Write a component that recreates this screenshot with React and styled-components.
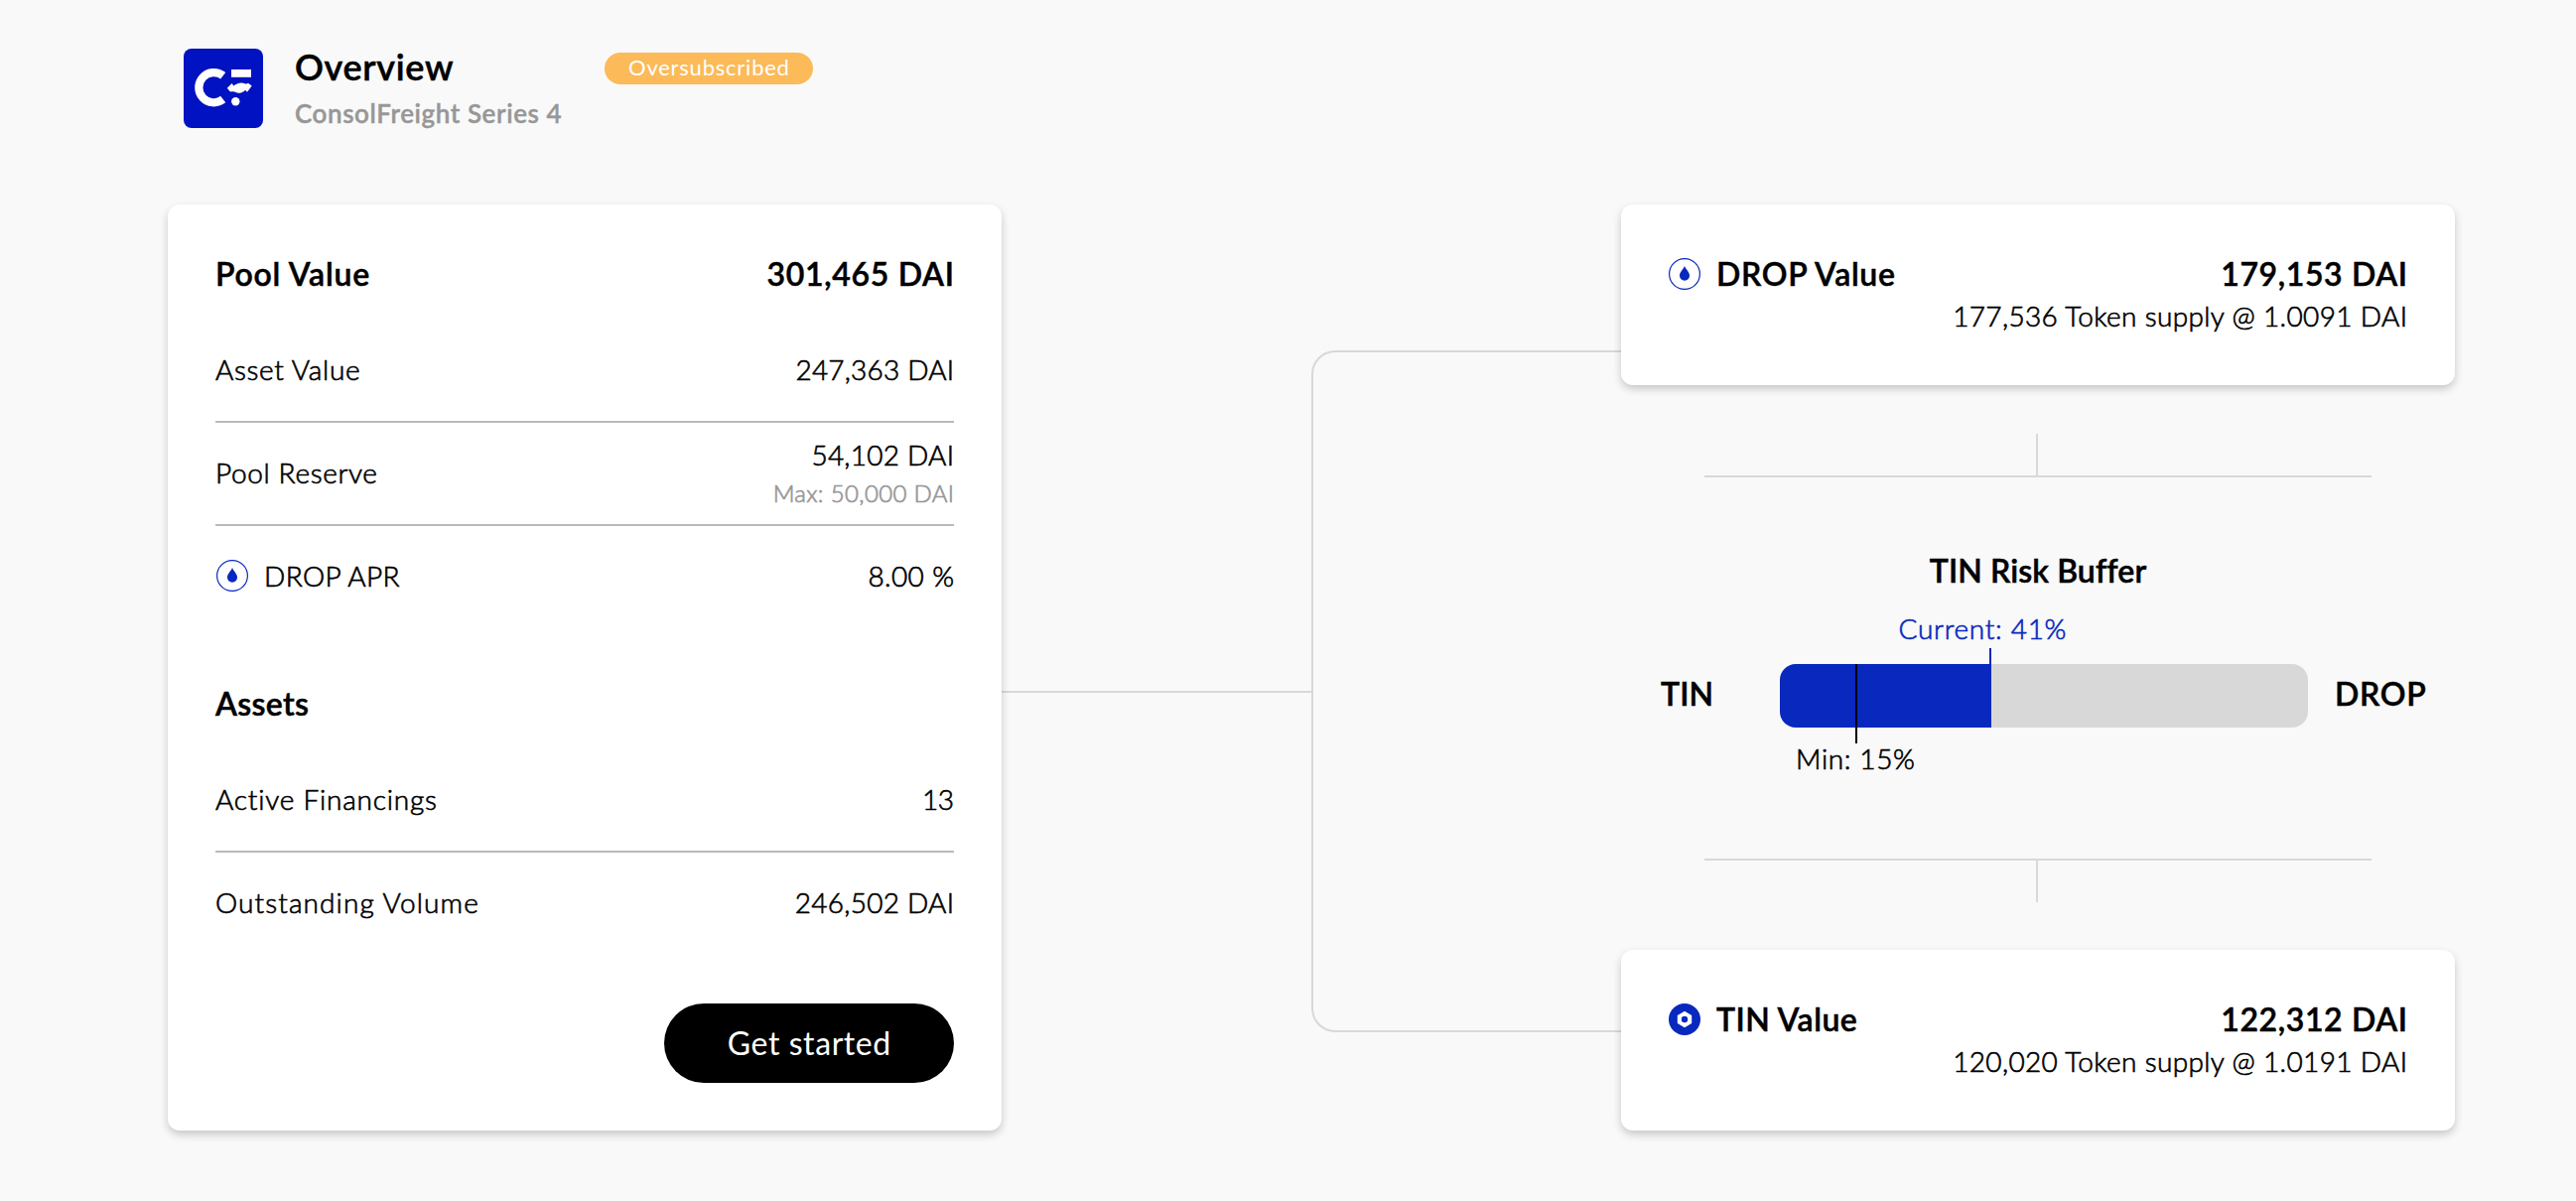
import React from "react";
import styled, { createGlobalStyle } from "styled-components";

const colors = {
  page: "#f9f9f9",
  card: "#ffffff",
  blue: "#0828be",
  logo: "#0012c1",
  line: "#d8d8d8",
  divider: "#bababa",
  muted: "#979797",
  badge: "#fcba59",
};

const GlobalStyle = createGlobalStyle`
  *, *::before, *::after { box-sizing: border-box; }
  body {
    margin: 0;
    background: ${colors.page};
    color: #000;
    font-family: Lato, "Open Sans", sans-serif;
  }
`;

const Page = styled.main`
  height: 1210px;
  padding: 49px 122px 0 169px;
  overflow: hidden;
`;

const Text = styled.span`
  display: block;
  font-size: 28px;
  line-height: 40px;
  font-weight: 300;
  -webkit-text-stroke: 0.65px currentColor;
  white-space: nowrap;
  letter-spacing: ${(p) => p.$track || 0}px;
  margin-right: ${(p) => -(p.$track || 0)}px;
`;

const Strong = styled(Text)`
  font-size: 32px;
  line-height: 44px;
  font-weight: 600;
  -webkit-text-stroke: 0.5px currentColor;
`;

const Note = styled(Text)`
  font-size: 24px;
  line-height: 38px;
  color: ${colors.muted};
`;

/* ---------- header ---------- */

const Header = styled.header`
  display: flex;
  height: 80px;
  margin-bottom: 77px;
  padding-left: 16px;
`;

const Titles = styled.div`
  width: 312px;
  margin: -6px 0 0 32px;
`;

const PageTitle = styled(Text).attrs({ as: "h1" })`
  margin-top: 0;
  margin-bottom: 1px;
  font-size: 36px;
  line-height: 48px;
  font-weight: 600;
  -webkit-text-stroke: 0.5px currentColor;
`;

const Subtitle = styled(Text)`
  font-size: 26px;
  line-height: 44px;
  font-weight: 600;
  -webkit-text-stroke: 0.4px currentColor;
  color: ${colors.muted};
`;

const Badge = styled.div`
  display: flex;
  align-items: center;
  justify-content: center;
  width: 210px;
  height: 32px;
  margin-top: 4px;
  border-radius: 16px;
  background: ${colors.badge};
  color: #fff;
`;

const BadgeText = styled(Text)`
  font-size: 22px;
  line-height: 30px;
  font-weight: 400;
  -webkit-text-stroke: 0;
  margin-top: -2px;
`;

/* ---------- board ---------- */

const Board = styled.div`
  display: grid;
  grid-template-columns: 840px 624px 840px;
  height: 933px;
`;

const Card = styled.section`
  position: relative;
  padding: 48px;
  border-radius: 12px;
  background: ${colors.card};
  box-shadow: 0 4px 8px rgba(0, 0, 0, 0.2);
`;

const PoolCard = styled(Card)`
  display: flex;
  flex-direction: column;
`;

const Group = styled.div`
  margin-bottom: ${(p) => p.$after}px;
`;

const Heading = styled.div`
  display: flex;
  align-items: center;
  justify-content: space-between;
  height: 44px;
  margin-bottom: ${(p) => p.$after || 0}px;
`;

const Row = styled.div`
  display: flex;
  align-items: center;
  justify-content: space-between;
  height: 104px;
  padding-bottom: 2px;
  border-bottom: 2px solid ${(p) => (p.$last ? "transparent" : colors.divider)};
`;

const Label = styled.div`
  display: flex;
  align-items: center;
  gap: ${(p) => p.$gap || 16}px;
  padding-left: ${(p) => p.$inset || 0}px;
`;

const Stack = styled.div`
  display: flex;
  flex-direction: column;
  align-items: flex-end;
  padding-top: 1px;
`;

const StartButton = styled.button`
  display: flex;
  align-items: center;
  justify-content: center;
  align-self: flex-end;
  width: 292px;
  height: 80px;
  padding: 0;
  border: 0;
  border-radius: 40px;
  background: #000;
  color: #fff;
  font-family: inherit;
`;

const ButtonText = styled(Text)`
  font-size: 32px;
  line-height: 44px;
  font-weight: 400;
  -webkit-text-stroke: 0;
`;

/* ---------- connector ---------- */

const Connector = styled.div`
  display: grid;
  grid-template-columns: 1fr 1fr;
`;

const Stem = styled.div`
  height: 2px;
  margin-top: 490px;
  background: ${colors.line};
`;

const Bracket = styled.div`
  height: 687px;
  margin-top: 147px;
  border: 2px solid ${colors.line};
  border-right: 0;
  border-radius: 24px 0 0 24px;
`;

/* ---------- tranches ---------- */

const Tranches = styled.div`
  display: flex;
  flex-direction: column;
`;

const TrancheCard = styled(Card)`
  height: 182px;
`;

const Supply = styled.div`
  display: flex;
  justify-content: flex-end;
`;

const Tee = styled.div`
  display: flex;
  flex-direction: ${(p) => (p.$down ? "column" : "column-reverse")};
  align-items: center;
  width: 672px;
  height: 44px;
  margin: ${(p) => (p.$down ? "0 0 48px 84px" : "49px 0 0 84px")};
`;

const TeeBar = styled.div`
  width: 100%;
  height: 2px;
  background: ${colors.line};
`;

const TeeStem = styled.div`
  width: 2px;
  flex: 1;
  margin-right: 2px;
  background: ${colors.line};
`;

const Buffer = styled.div`
  flex: 1;
  padding-top: 72px;
`;

const BufferTitle = styled.div`
  display: flex;
  justify-content: center;
  margin-bottom: 16px;
`;

const MarkLabel = styled.div`
  display: flex;
  justify-content: center;
  width: 200px;
  height: 40px;
  margin-left: ${(p) => p.$left}px;
  color: ${(p) => p.$color || "#000"};
`;

const BarRow = styled.div`
  display: grid;
  grid-template-columns: 120px 532px 1fr;
  align-items: center;
  height: 64px;
  margin: 16px 0 11px;
  padding-left: 40px;
`;

const Track = styled.div`
  position: relative;
  height: 64px;
  border-radius: 16px;
  background: linear-gradient(to right, ${colors.blue} 213px, ${colors.line} 213px);
`;

const Tick = styled.i`
  position: absolute;
  left: ${(p) => p.$at}px;
  top: ${(p) => p.$top}px;
  width: 2px;
  height: 80px;
  background: ${(p) => p.$color};
`;

const Side = styled.div`
  padding: ${(p) => (p.$right ? "0 0 5px 27px" : "0 0 5px 0")};
`;

/* ---------- drawings ---------- */

const Icon = styled.svg`
  display: block;
  flex: none;
`;

const Logo = () => (
  <Icon width="80" height="80" viewBox="0 0 80 80">
    <rect width="80" height="80" rx="8" fill={colors.logo} />
    <path d="M39.7 27.3A15.1 15.1 0 1 0 39.7 51.1" fill="none" stroke="#fff" strokeWidth="8.2" />
    <rect x="48" y="21" width="20" height="7.8" fill="#fff" />
    <path
      d="M43.8 39.8 48.6 35 50.4 37.6C53 35.6 56 34 60 34.800 62 35.200 63.200 36 65 34.800L68.700 37.400 64 43.800 62.200 41.800C60 44 57.500 45.200 54 44.400 51.500 43.800 50 43 47 43.400Z"
      fill="#fff"
    />
    <circle cx="52.3" cy="53.3" r="4.2" fill="#fff" />
  </Icon>
);

const DropIcon = () => (
  <Icon width="32" height="32" viewBox="0 0 32 32">
    <circle cx="16" cy="16" r="15.400" fill="#fff" stroke={colors.blue} strokeWidth="1.200" />
    <path d="M16 8c1.300 3.400 5 6 5 9.700a5 5 0 0 1-10 0C11 14 14.700 11.400 16 8z" fill={colors.blue} />
  </Icon>
);

const TinIcon = () => (
  <Icon width="32" height="32" viewBox="0 0 32 32">
    <circle cx="16" cy="16" r="16" fill={colors.blue} />
    <path d="M16 7.700 23.200 11.900V20.100L16 24.300 8.800 20.100V11.900z" fill="#fff" />
    <circle cx="16" cy="16" r="3.200" fill={colors.blue} />
  </Icon>
);

/* ---------- page ---------- */

const Tranche = ({ icon, name, nameTrack, value, supply }) => (
  <TrancheCard>
    <Heading>
      <Label>
        {icon}
        <Strong $track={nameTrack}>{name}</Strong>
      </Label>
      <Strong $track={0.62}>{value}</Strong>
    </Heading>
    <Supply>
      <Text $track={0.35}>{supply}</Text>
    </Supply>
  </TrancheCard>
);

export default function App() {
  return (
    <>
      <GlobalStyle />
      <Page>
        <Header>
          <Logo />
          <Titles>
            <PageTitle $track={0.67}>Overview</PageTitle>
            <Subtitle $track={0.58}>ConsolFreight Series 4</Subtitle>
          </Titles>
          <Badge>
            <BadgeText $track={0.77}>Oversubscribed</BadgeText>
          </Badge>
        </Header>

        <Board>
          <PoolCard>
            <Group $after={53}>
              <Heading $after={24}>
                <Strong $track={0.78}>Pool Value</Strong>
                <Strong $track={0.7}>301,465 DAI</Strong>
              </Heading>
              <Row>
                <Text $track={0.65}>Asset Value</Text>
                <Text $track={0.18}>247,363 DAI</Text>
              </Row>
              <Row>
                <Text $track={0.65}>Pool Reserve</Text>
                <Stack>
                  <Text $track={0.24}>54,102 DAI</Text>
                  <Note $track={0.33}>Max: 50,000 DAI</Note>
                </Stack>
              </Row>
              <Row $last>
                <Label $inset={1}>
                  <DropIcon />
                  <Text $track={0.35}>DROP APR</Text>
                </Label>
                <Text $track={0.38}>8.00 %</Text>
              </Row>
            </Group>

            <Group $after={48}>
              <Heading $after={24}>
                <Strong $track={0.3}>Assets</Strong>
              </Heading>
              <Row>
                <Text $track={0.8}>Active Financings</Text>
                <Text $track={-0.5}>13</Text>
              </Row>
              <Row $last>
                <Text $track={1.1}>Outstanding Volume</Text>
                <Text $track={0.26}>246,502 DAI</Text>
              </Row>
            </Group>

            <StartButton>
              <ButtonText $track={0.57}>Get started</ButtonText>
            </StartButton>
          </PoolCard>

          <Connector>
            <Stem />
            <Bracket />
          </Connector>

          <Tranches>
            <Tranche
              icon={<DropIcon />}
              name="DROP Value"
              nameTrack={0.67}
              value="179,153 DAI"
              supply="177,536 Token supply @ 1.0091 DAI"
            />
            <Tee>
              <TeeBar />
              <TeeStem />
            </Tee>
            <Buffer>
              <BufferTitle>
                <Strong $track={0.1}>TIN Risk Buffer</Strong>
              </BufferTitle>
              <MarkLabel $left={264} $color={colors.blue}>
                <Text $track={0.7}>Current: 41%</Text>
              </MarkLabel>
              <BarRow>
                <Side>
                  <Strong $track={0.1}>TIN</Strong>
                </Side>
                <Track>
                  <Tick $at={211} $top={-16} $color={colors.blue} />
                  <Tick $at={76} $top={0} $color="#000" />
                </Track>
                <Side $right>
                  <Strong $track={0.7}>DROP</Strong>
                </Side>
              </BarRow>
              <MarkLabel $left={136}>
                <Text $track={0.62}>Min: 15%</Text>
              </MarkLabel>
            </Buffer>
            <Tee $down>
              <TeeBar />
              <TeeStem />
            </Tee>
            <Tranche
              icon={<TinIcon />}
              name="TIN Value"
              nameTrack={0.48}
              value="122,312 DAI"
              supply="120,020 Token supply @ 1.0191 DAI"
            />
          </Tranches>
        </Board>
      </Page>
    </>
  );
}
